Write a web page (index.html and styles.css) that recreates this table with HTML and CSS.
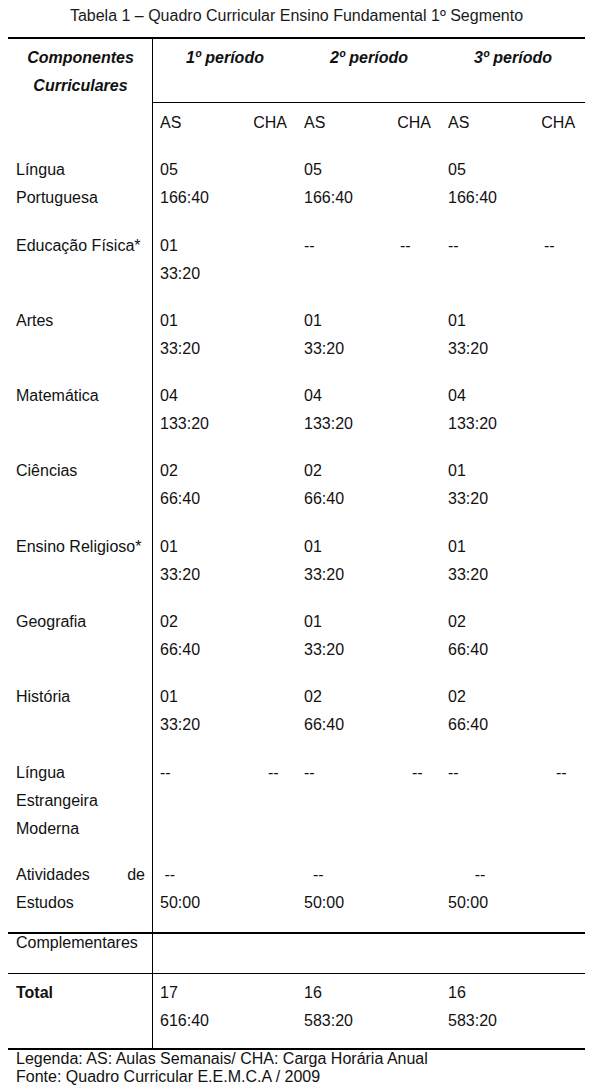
FILE: index.html
```html
<!DOCTYPE html>
<html lang="pt">
<head>
<meta charset="utf-8">
<title>Tabela 1 – Quadro Curricular</title>
<link rel="stylesheet" href="styles.css">
</head>
<body>
<div class="page">
  <p class="caption">Tabela 1 – Quadro Curricular Ensino Fundamental 1º Segmento</p>
  <table class="grade">
    <colgroup>
      <col class="c-label">
      <col class="c-sub"><col class="c-sub">
      <col class="c-sub"><col class="c-sub">
      <col class="c-sub"><col class="c-sub">
    </colgroup>
    <thead>
      <tr class="head1">
        <th class="label head-label" rowspan="2">Componentes Curriculares</th>
        <th class="period" colspan="2">1º período</th>
        <th class="period" colspan="2">2º período</th>
        <th class="period" colspan="2">3º período</th>
      </tr>
      <tr class="head2">
        <td class="as">AS</td><td class="cha">CHA</td>
        <td class="as">AS</td><td class="cha">CHA</td>
        <td class="as">AS</td><td class="cha">CHA</td>
      </tr>
    </thead>
    <tbody>
      <tr class="row">
        <td class="label">Língua Portuguesa</td>
        <td class="as">05<br>166:40</td><td></td>
        <td class="as">05<br>166:40</td><td></td>
        <td class="as">05<br>166:40</td><td></td>
      </tr>
      <tr class="row">
        <td class="label">Educação Física*</td>
        <td class="as">01<br>33:20</td><td></td>
        <td class="as">--</td><td class="dash-far">--</td>
        <td class="as">--</td><td class="dash-far">--</td>
      </tr>
      <tr class="row">
        <td class="label">Artes</td>
        <td class="as">01<br>33:20</td><td></td>
        <td class="as">01<br>33:20</td><td></td>
        <td class="as">01<br>33:20</td><td></td>
      </tr>
      <tr class="row">
        <td class="label">Matemática</td>
        <td class="as">04<br>133:20</td><td></td>
        <td class="as">04<br>133:20</td><td></td>
        <td class="as">04<br>133:20</td><td></td>
      </tr>
      <tr class="row">
        <td class="label">Ciências</td>
        <td class="as">02<br>66:40</td><td></td>
        <td class="as">02<br>66:40</td><td></td>
        <td class="as">01<br>33:20</td><td></td>
      </tr>
      <tr class="row">
        <td class="label">Ensino Religioso*</td>
        <td class="as">01<br>33:20</td><td></td>
        <td class="as">01<br>33:20</td><td></td>
        <td class="as">01<br>33:20</td><td></td>
      </tr>
      <tr class="row">
        <td class="label">Geografia</td>
        <td class="as">02<br>66:40</td><td></td>
        <td class="as">01<br>33:20</td><td></td>
        <td class="as">02<br>66:40</td><td></td>
      </tr>
      <tr class="row">
        <td class="label">História</td>
        <td class="as">01<br>33:20</td><td></td>
        <td class="as">02<br>66:40</td><td></td>
        <td class="as">02<br>66:40</td><td></td>
      </tr>
      <tr class="row">
        <td class="label">Língua Estrangeira Moderna</td>
        <td class="as">--</td><td class="dash-near">--</td>
        <td class="as">--</td><td class="dash-near">--</td>
        <td class="as">--</td><td class="dash-near">--</td>
      </tr>
      <tr class="row row-last">
        <td class="label justify">Atividades de Estudos</td>
        <td class="as">&nbsp;--<br>50:00</td><td></td>
        <td class="as">&nbsp;&nbsp;--<br>50:00</td><td></td>
        <td class="as">&nbsp;&nbsp;&nbsp;&nbsp;&nbsp;&nbsp;--<br>50:00</td><td></td>
      </tr>
      <tr class="row-compl">
        <td class="label">Complementares</td>
        <td></td><td></td><td></td><td></td><td></td><td></td>
      </tr>
      <tr class="row-total">
        <td class="label strong">Total</td>
        <td class="as">17<br>616:40</td><td></td>
        <td class="as">16<br>583:20</td><td></td>
        <td class="as">16<br>583:20</td><td></td>
      </tr>
    </tbody>
  </table>
  <p class="legend">Legenda: AS: Aulas Semanais/ CHA: Carga Horária Anual<br>Fonte: Quadro Curricular E.E.M.C.A / 2009</p>
</div>
</body>
</html>
```

FILE: styles.css
```css
html, body {
  margin: 0;
  padding: 0;
  background: #ffffff;
}

body {
  font-family: "Liberation Sans", Arial, sans-serif;
  font-size: 16px;
  color: #111111;
}

.page {
  width: 577px;
  padding: 7px 0 0 8px;
}

.caption {
  margin: 0 0 12px 0;
  line-height: 18px;
  text-align: center;
  color: #1a1a1a;
}

.grade {
  width: 577px;
  table-layout: fixed;
  border-collapse: separate;
  border-spacing: 0;
  line-height: 28px;
}

.c-label { width: 145px; }
.c-sub { width: 72px; }

.grade th,
.grade td {
  padding: 0;
  vertical-align: top;
  text-align: left;
  font-weight: normal;
  white-space: nowrap;
}

.grade .label {
  padding-left: 8px;
  padding-right: 7px;
  border-right: 1px solid #000;
  white-space: normal;
}

.grade .justify {
  text-align: justify;
}

.grade .strong {
  font-weight: bold;
}

/* header */
.head1 th {
  border-top: 2px solid #000;
}

.grade .head-label {
  padding-top: 5px;
  text-align: center;
  font-weight: bold;
  font-style: italic;
}

.grade .period {
  padding-top: 5px;
  padding-bottom: 30px;
  text-align: center;
  font-weight: bold;
  font-style: italic;
  border-bottom: 1px solid #000;
}

.head2 td {
  padding-top: 6px;
}

.grade .as {
  padding-left: 7px;
}

.grade .cha {
  text-align: right;
  padding-right: 10px;
}

.grade .dash-far {
  padding-left: 31px;
}

.grade .dash-near {
  padding-left: 43px;
}

/* body rows */
.row td {
  padding-top: 19.3px;
}

.row-last td {
  padding-top: 18px;
  padding-bottom: 15px;
}

.row-compl td {
  border-top: 2px solid #000;
  padding-top: 0;
  padding-bottom: 21px;
  line-height: 18px;
}

.row-total td {
  border-top: 1px solid #000;
  border-bottom: 2px solid #000;
  padding-top: 5px;
  padding-bottom: 13px;
}

.legend {
  margin: 0;
  padding-left: 8px;
  line-height: 18px;
  color: #111111;
}
```
